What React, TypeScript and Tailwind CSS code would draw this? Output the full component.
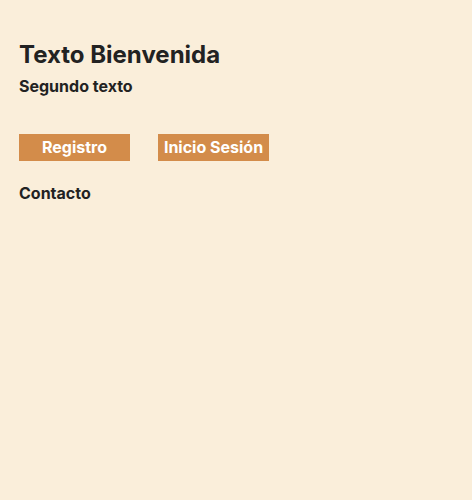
export default function App() {
  return (
    <div className="min-h-[500px] w-full bg-[#faeeda] px-[19px] pt-[40px] text-[#222222] [font-family:Inter,'Noto_Sans',sans-serif]">
      <h1 className="text-[24px] font-bold leading-[30px]">Texto Bienvenida</h1>
      <p className="mt-[6px] text-[16px] font-bold leading-[20px]">Segundo texto</p>

      <div className="mt-[38px] flex gap-[28px]">
        <button className="h-[27px] w-[111px] bg-[#d38c4a] pb-[1px] text-[16px] font-bold leading-[20px] text-white">
          Registro
        </button>
        <button className="h-[27px] w-[111px] bg-[#d38c4a] pb-[1px] text-[16px] font-bold leading-[20px] text-white">
          Inicio Sesión
        </button>
      </div>

      <p className="mt-[22px] text-[16px] font-bold leading-[20px]">Contacto</p>
    </div>
  );
}
